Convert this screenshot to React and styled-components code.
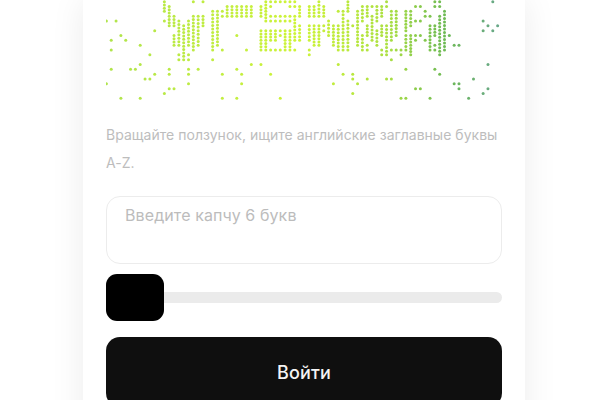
import React from 'react'
import styled, { createGlobalStyle } from 'styled-components'

// [column, "rows"] rows are single numbers or a-b runs
const dots = [
  [0,'4,17'],[1,'8,10,14'],[2,'4'],[3,'7,20'],[4,'8'],[5,'14'],[6,'14'],[7,'9,13,20'],[8,'16'],[9,'11,16'],[10,'6,15'],
  [12,'0-2,4,19'],[13,'1-5,14,15,18'],[14,'3-5,7-9,18'],[15,'4-9,11-12'],[16,'5-12'],[17,'4-9,11,12,14,15,17'],[18,'0,3-10'],[19,'3-9,14'],[20,'0,3-5'],
  [22,'2-10,12'],[23,'2-9'],[24,'2,3,10,15,20'],[25,'1-3'],[26,'1-3'],[27,'1-3,7,14,20'],[28,'1-3,15,17'],[29,'1-3,10'],[30,'1-3,13'],
  [32,'1-3,6-10,13'],[33,'0-4,6-10'],[34,'0,1,3,4,6-8,10,15'],[35,'0,3,4,6-8,10'],[36,'0,3,4,6,7,10,20'],[37,'0,3,4,6-10'],[38,'0,1,3,4,6-10'],[39,'0,1,3-8,10'],[40,'1-3,5-8'],
  [42,'1-3,5-8,10,11'],[43,'1-3,5-9'],[44,'0-3,5-9'],[45,'1-3,5,6'],[46,'4-7'],[47,'5-9,17'],[48,'2,5-10,13'],[49,'2-10,15'],[50,'0-2,4-10'],[51,'5,15,16,19'],
  [52,'2-9,17'],[53,'1-4,7-10'],[54,'1-3,5-7,9,10,16'],[55,'1,3-8'],[56,'1-4,6-9'],[57,'1-3,5-7,10,11'],[58,'0,1,5-11,16'],[59,'2-8,10,12,16'],[60,'2-7,10'],[61,'10,11,20'],
  [62,'2-6,7-10,14,20'],[63,'2-5,7-11'],[64,'1,4,7,8,18'],[65,'1,4,7,18'],[66,'2,3,8'],[67,'3,5-10,20'],[68,'0,1,5-7,9,10,14'],[69,'0,1,3-11,15'],[70,'2-10'],[71,'7'],
  [72,'9,17'],[73,'9,17,18'],[75,'20'],[76,'16'],[78,'4,6,19'],[79,'5,13,18'],[80,'0,6'],[81,'5'],
]

const stops = [[0,[176,228,76]],[40,[206,244,56]],[58,[172,224,66]],[70,[110,186,84]],[81,[104,168,136]]]

function colorAt(col) {
  let i = 0
  while (i < stops.length - 2 && col > stops[i + 1][0]) i++
  const [a, ca] = stops[i]
  const [b, cb] = stops[i + 1]
  const t = (col - a) / (b - a)
  return `rgb(${ca.map((v, k) => Math.round(v + (cb[k] - v) * t)).join(',')})`
}

// runs are drawn tighter than the noise grid, that is what gives the letters their stripes
function parseRows(text) {
  return text.split(',').flatMap(part => {
    const [from, to] = part.split('-').map(Number)
    if (to === undefined) return [from]
    const count = Math.round((to - from) / 0.72)
    return Array.from({ length: count + 1 }, (_, k) => from + (k * (to - from)) / count)
  })
}

function Captcha() {
  return (
    <CaptchaBox viewBox="0 0 396 104" aria-label="captcha">
      {dots.map(([col, rows]) =>
        parseRows(rows).map(row => (
          <circle key={`${col}-${row}`} cx={col * 4.83 + 0.4} cy={row * 4.83 + 1.7} r="1.5" fill={colorAt(col)} />
        ))
      )}
    </CaptchaBox>
  )
}

export default function App() {
  return (
    <Page>
      <GlobalStyle />
      <Card>
        <Captcha />
        <Hint>Вращайте ползунок, ищите английские заглавные буквы A-Z.</Hint>
        <CodeInput placeholder="Введите капчу 6 букв" />
        <Slider type="range" min="0" max="100" defaultValue="0" />
        <Submit>Войти</Submit>
      </Card>
    </Page>
  )
}

const GlobalStyle = createGlobalStyle`
  html, body {
    margin: 0;
    background: #fff;
    overflow: hidden;
  }
  body {
    font-family: Inter, "Liberation Sans", sans-serif;
  }
`

const Page = styled.div`
  height: 400px;
  overflow: hidden;
`

const Card = styled.div`
  display: flex;
  flex-direction: column;
  box-sizing: border-box;
  width: 442px;
  height: 440px;
  margin-left: 83px;
  padding: 0 23px;
  background: #fff;
  box-shadow: 0 0 32px rgba(0, 0, 0, 0.08);
`

const CaptchaBox = styled.svg`
  display: block;
  width: 396px;
  height: 104px;
  flex: none;
  filter: blur(0.4px);
`

const Hint = styled.p`
  margin: 17px 0 0;
  color: #bdbdbd;
  font-size: 14px;
  line-height: 28px;
  letter-spacing: 0.02px;
`

const CodeInput = styled.textarea`
  box-sizing: border-box;
  display: block;
  width: 100%;
  height: 68px;
  margin-top: 19px;
  padding: 8px 18px;
  border: 1px solid #ececec;
  border-radius: 14px;
  outline: none;
  resize: none;
  background: #fff;
  font-family: inherit;
  font-size: 16px;
  line-height: 20px;
  letter-spacing: 0.1px;

  &::placeholder {
    color: #bcbcbc;
    opacity: 1;
  }
`

const Slider = styled.input`
  appearance: none;
  display: block;
  width: 100%;
  height: 47px;
  margin: 10px 0 0;
  background: transparent;

  &::-webkit-slider-runnable-track {
    height: 11px;
    border-radius: 6px;
    background: #ebebeb;
  }

  &::-webkit-slider-thumb {
    appearance: none;
    width: 58px;
    height: 47px;
    margin-top: -18px;
    border-radius: 11px;
    background: #000;
  }
`

const Submit = styled.button`
  flex: none;
  height: 70px;
  margin-top: 16px;
  border: none;
  border-radius: 14px;
  background: #0f0f0f;
  color: #f4f4f4;
  font-family: inherit;
  font-size: 18px;
  font-weight: 500;
  letter-spacing: 0.2px;
`
